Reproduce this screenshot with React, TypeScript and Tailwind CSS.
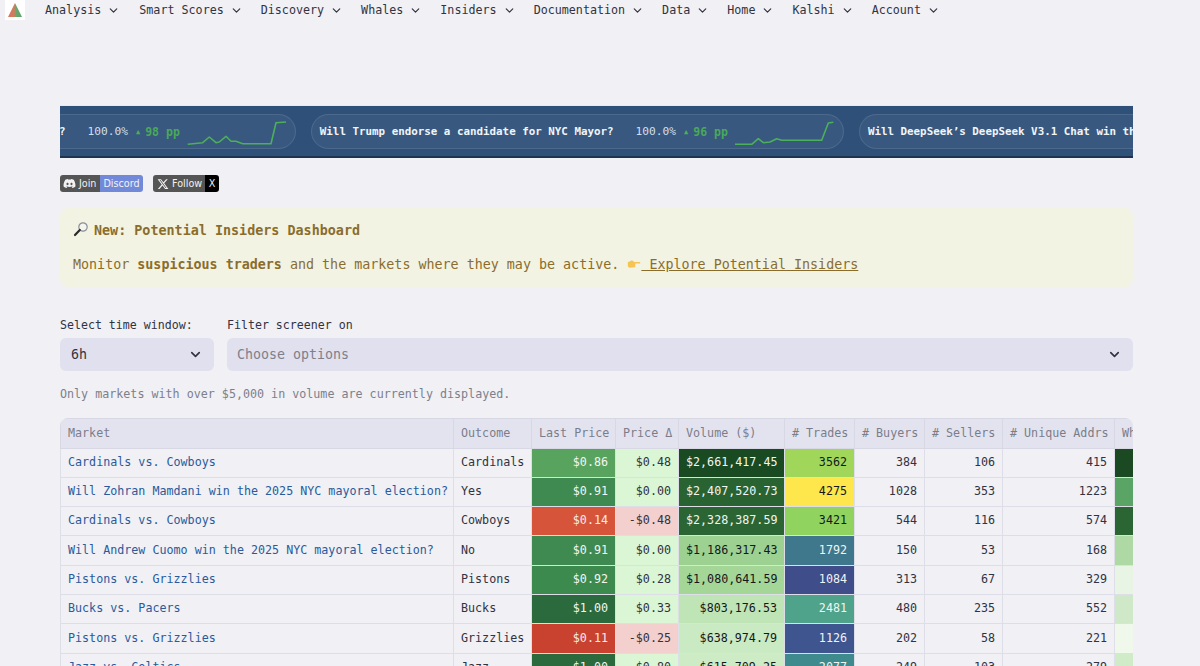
import { ChevronDown } from "lucide-react";
import { FaDiscord } from "react-icons/fa";
import { FaXTwitter } from "react-icons/fa6";

const mono = "font-['DejaVu_Sans_Mono','Liberation_Mono',monospace]";

const navItems = ["Analysis", "Smart Scores", "Discovery", "Whales", "Insiders", "Documentation", "Data", "Home", "Kalshi", "Account"];

const headers = [
  "Market",
  "Outcome",
  "Last Price",
  "Price Δ",
  "Volume ($)",
  "# Trades",
  "# Buyers",
  "# Sellers",
  "# Unique Addrs",
  "Whale Volume",
];

const colWidths = ["w-[393px]", "w-[78px]", "w-[84px]", "w-[63px]", "w-[106px]", "w-[70px]", "w-[70px]", "w-[78px]", "w-[112px]", "w-[100px]"];

const rows = [
  { m: "Cardinals vs. Cowboys", o: "Cardinals", p: "$0.86", pc: "bg-[#58a35e] text-[#f3f6f3]", d: "$0.48", dc: "bg-[#daf6d4]", v: "$2,661,417.45", vc: "bg-[#1a4a22] text-[#f3f6f3]", t: "3562", tc: "bg-[#a0d75a] text-[#14181a]", b: "384", s: "106", u: "415", w: "bg-[#1b4a22]" },
  { m: "Will Zohran Mamdani win the 2025 NYC mayoral election?", o: "Yes", p: "$0.91", pc: "bg-[#3f8a50] text-[#f3f6f3]", d: "$0.00", dc: "bg-[#daf6d4]", v: "$2,407,520.73", vc: "bg-[#2a6332] text-[#f3f6f3]", t: "4275", tc: "bg-[#fde74c] text-[#14181a]", b: "1028", s: "353", u: "1223", w: "bg-[#5aa566]" },
  { m: "Cardinals vs. Cowboys", o: "Cowboys", p: "$0.14", pc: "bg-[#d5543a] text-[#f7ecea]", d: "-$0.48", dc: "bg-[#f3cfcd]", v: "$2,328,387.59", vc: "bg-[#2c6534] text-[#f3f6f3]", t: "3421", tc: "bg-[#90d45f] text-[#14181a]", b: "544", s: "116", u: "574", w: "bg-[#2c6534]" },
  { m: "Will Andrew Cuomo win the 2025 NYC mayoral election?", o: "No", p: "$0.91", pc: "bg-[#3f8a50] text-[#f3f6f3]", d: "$0.00", dc: "bg-[#daf6d4]", v: "$1,186,317.43", vc: "bg-[#9cd192] text-[#14181a]", t: "1792", tc: "bg-[#3f788c] text-[#eef4f6]", b: "150", s: "53", u: "168", w: "bg-[#aed9a5]" },
  { m: "Pistons vs. Grizzlies", o: "Pistons", p: "$0.92", pc: "bg-[#3d8a4e] text-[#f3f6f3]", d: "$0.28", dc: "bg-[#daf6d4]", v: "$1,080,641.59", vc: "bg-[#a4d698] text-[#14181a]", t: "1084", tc: "bg-[#3f4d8a] text-[#eef4f6]", b: "313", s: "67", u: "329", w: "bg-[#e8f5e4]" },
  { m: "Bucks vs. Pacers", o: "Bucks", p: "$1.00", pc: "bg-[#2b6a3c] text-[#f3f6f3]", d: "$0.33", dc: "bg-[#daf6d4]", v: "$803,176.53", vc: "bg-[#bfe5b6] text-[#14181a]", t: "2481", tc: "bg-[#4ea38a] text-[#eef6f2]", b: "480", s: "235", u: "552", w: "bg-[#cfe8c8]" },
  { m: "Pistons vs. Grizzlies", o: "Grizzlies", p: "$0.11", pc: "bg-[#c9422f] text-[#f7ecea]", d: "-$0.25", dc: "bg-[#f3cfcd]", v: "$638,974.79", vc: "bg-[#c9eac2] text-[#14181a]", t: "1126", tc: "bg-[#3f5590] text-[#eef4f6]", b: "202", s: "58", u: "221", w: "bg-[#f0f8ec]" },
  { m: "Jazz vs. Celtics", o: "Jazz", p: "$1.00", pc: "bg-[#2b6a3c] text-[#f3f6f3]", d: "$0.80", dc: "bg-[#daf6d4]", v: "$615,709.25", vc: "bg-[#cdecc6] text-[#14181a]", t: "2077", tc: "bg-[#3f8a8c] text-[#eef6f2]", b: "249", s: "103", u: "279", w: "bg-[#d0ebc8]" },
];

function Logo() {
  return (
    <svg width="20" height="20" viewBox="0 0 20 20" className="ml-[5px] mr-[20px] shrink-0 bg-white">
      <defs>
        <linearGradient id="logoFill" x1="0" x2="1" y1="0" y2="0">
          <stop offset="0" stopColor="#e0735c" />
          <stop offset="0.45" stopColor="#c9805f" />
          <stop offset="0.6" stopColor="#6aa56a" />
          <stop offset="1" stopColor="#58a56e" />
        </linearGradient>
      </defs>
      <polygon points="10,3 3,17 17,17" fill="url(#logoFill)" />
    </svg>
  );
}

function Spark({ points }: { points: string }) {
  return (
    <svg width="100" height="32" viewBox="0 0 100 32" className="shrink-0" fill="none">
      <polyline points={points} stroke="#4caf5a" strokeWidth="1.6" strokeLinejoin="round" />
    </svg>
  );
}

function Stats({ pp }: { pp: string }) {
  return (
    <>
      <span className="ml-[22px] text-[11.2px] text-[#d0dfec]">100.0%</span>
      <span className="ml-[8px] text-[7px] text-[#4caf5a]">▲</span>
      <span className="ml-[5px] mr-[7px] text-[11.5px] font-bold text-[#4aa85a]">{pp} pp</span>
    </>
  );
}

function Ticker() {
  return (
    <div className="flex h-[53px] items-center overflow-hidden border-t border-b-2 border-t-[#e8ecf2] border-b-[#1d3350] bg-[#2e5079]">
      <div className={`flex items-center gap-[15px] whitespace-nowrap ${mono}`}>
        <div className="-ml-[32px] flex h-[35px] items-center rounded-full border border-white/10 bg-white/5 pl-[30px] pr-[8px] pt-[3px]">
          <span className="text-[10.85px] font-bold text-[#f1f5f9]">?</span>
          <Stats pp="98" />
          <Spark points="0.7,27.3 15.7,25.7 22.3,20 29,25.7 32.3,25 39,19.3 44,24.3 49,24.3 55.7,26.7 69,26.7 84,26.7 89,5.7 99,5" />
        </div>
        <div className="flex h-[35px] items-center rounded-full border border-white/10 bg-white/5 pl-[8px] pr-[8px] pt-[3px]">
          <span className="text-[10.85px] font-bold text-[#f1f5f9]">Will Trump endorse a candidate for NYC Mayor?</span>
          <Stats pp="96" />
          <Spark points="0,27.3 16.7,27.3 23.3,21.7 28.3,25.7 35,25 41.7,21.7 46.7,23.3 86.7,23.3 93.3,6 98.3,5.3" />
        </div>
        <div className="flex h-[35px] items-center rounded-full border border-white/10 bg-white/5 pl-[8px] pr-[8px] pt-[3px]">
          <span className="text-[10.85px] font-bold text-[#f1f5f9]">Will DeepSeek’s DeepSeek V3.1 Chat win the</span>
        </div>
      </div>
    </div>
  );
}

function Badges() {
  const f = "font-['DejaVu_Sans','Liberation_Sans',sans-serif]";
  return (
    <div className={`mt-[17px] flex gap-[10px] text-[9.6px] leading-none text-[#f2f2f2] ${f}`}>
      <div className="flex h-[17px] overflow-hidden rounded-[3px]">
        <span className="flex w-[40px] items-center gap-[3px] bg-[#555555] pl-[3px]">
          <FaDiscord className="h-[13px] w-[13px] shrink-0" />
          <span>Join</span>
        </span>
        <span className="flex w-[43px] items-center justify-center bg-[#7289da]">Discord</span>
      </div>
      <div className="flex h-[17px] overflow-hidden rounded-[3px]">
        <span className="flex w-[52px] items-center gap-[3px] bg-[#555555] pl-[4px]">
          <FaXTwitter className="h-[12px] w-[12px] shrink-0" />
          <span>Follow</span>
        </span>
        <span className="flex w-[14px] items-center justify-center bg-black">X</span>
      </div>
    </div>
  );
}

function Magnifier() {
  return (
    <svg width="16" height="16" viewBox="0 0 16 16" className="mr-[5px] inline-block align-[-2px]">
      <circle cx="10" cy="6" r="4.2" fill="#f5f5f0" stroke="#8a8f98" strokeWidth="1.2" />
      <path d="M6.8 9 L2 14" stroke="#2b2b2b" strokeWidth="2.2" strokeLinecap="round" />
    </svg>
  );
}

function Hand() {
  return (
    <svg width="14" height="10" viewBox="0 0 17 12" className="inline-block align-[0px]">
      <path d="M1 4 L6 1.5 L9 3.5 L16 3.5 L16 5.5 L10 5.5 L10 10 L3 10.5 L1 9 Z" fill="#f6c453" />
    </svg>
  );
}

function Notice() {
  return (
    <div className="mt-[16px] flex h-[79px] flex-col rounded-lg bg-[#f3f3e4] pl-[13px] text-[#8a6d2b]">
      <div className="mt-[13px] text-[13.4px] font-bold leading-[18px]">
        <Magnifier />
        New: Potential Insiders Dashboard
      </div>
      <div className="mt-[16px] text-[13.35px] leading-[18px]">
        Monitor <b>suspicious traders</b> and the markets where they may be active.{" "}
        <a className="underline">
          <Hand /> Explore Potential Insiders
        </a>
      </div>
    </div>
  );
}

function Filters() {
  return (
    <div className="mt-[29px] flex gap-[13px] text-[11.6px] text-[#31333f]">
      <div className="w-[154px] shrink-0">
        <div className="h-[22px] leading-[18px]">Select time window:</div>
        <div className="flex h-[33px] items-center justify-between rounded-md bg-[#e0e0ee] pl-[11px] pr-[11px] text-[13.3px]">
          <span>6h</span>
          <ChevronDown size={15} strokeWidth={2.6} />
        </div>
      </div>
      <div className="flex-1">
        <div className="h-[22px] leading-[18px]">Filter screener on</div>
        <div className="flex h-[33px] items-center justify-between rounded-md bg-[#e0e0ee] pl-[10px] pr-[11px] text-[13.3px]">
          <span className="text-[#7d7f8c]">Choose options</span>
          <ChevronDown size={15} strokeWidth={2.6} />
        </div>
      </div>
    </div>
  );
}

function Screener() {
  const td = "border border-[#dedee8] px-[7px] whitespace-nowrap overflow-hidden";
  return (
    <div className="mt-[15px] overflow-hidden rounded-t-lg">
      <table className="w-[1154px] table-fixed border-collapse text-[11.7px] text-[#31333f]">
        <colgroup>
          {colWidths.map((w, i) => (
            <col key={i} className={w} />
          ))}
        </colgroup>
        <thead>
          <tr className="h-[29.5px] bg-[#e3e3ef] text-[#7b7d8a]">
            {headers.map((h) => (
              <th key={h} className="border border-[#d8d8e4] px-[7px] pt-[2px] text-left font-normal whitespace-nowrap overflow-hidden">
                {h}
              </th>
            ))}
          </tr>
        </thead>
        <tbody>
          {rows.map((r, i) => (
            <tr key={i} className="h-[29.3px]">
              <td className={`${td} text-[#2a5a9a]`}>{r.m}</td>
              <td className={td}>{r.o}</td>
              <td className={`${td} text-right ${r.pc}`}>{r.p}</td>
              <td className={`${td} text-right ${r.dc}`}>{r.d}</td>
              <td className={`${td} text-right ${r.vc}`}>{r.v}</td>
              <td className={`${td} text-right ${r.tc}`}>{r.t}</td>
              <td className={`${td} text-right`}>{r.b}</td>
              <td className={`${td} text-right`}>{r.s}</td>
              <td className={`${td} text-right`}>{r.u}</td>
              <td className={`${td} ${r.w}`}></td>
            </tr>
          ))}
        </tbody>
      </table>
    </div>
  );
}

export default function App() {
  return (
    <div className={`h-[666px] w-[1200px] overflow-hidden bg-[#f0f0f5] ${mono}`}>
      <nav className="flex h-[21px] items-start gap-[18px] text-[11.7px] leading-[21px] text-[#31333f]">
        <Logo />
        {navItems.map((n, i) => (
          <span key={n} className={`flex items-center gap-[6px] ${i === 0 ? "-ml-[18px] mr-[1px]" : ""}`}>
            {n}
            <ChevronDown size={13} strokeWidth={2.2} />
          </span>
        ))}
      </nav>
      <main className="ml-[60px] mt-[84px] w-[1073px]">
        <Ticker />
        <Badges />
        <Notice />
        <Filters />
        <p className="mt-[14px] text-[11.7px] leading-[18px] text-[#7d7f8c]">
          Only markets with over $5,000 in volume are currently displayed.
        </p>
        <Screener />
      </main>
    </div>
  );
}
